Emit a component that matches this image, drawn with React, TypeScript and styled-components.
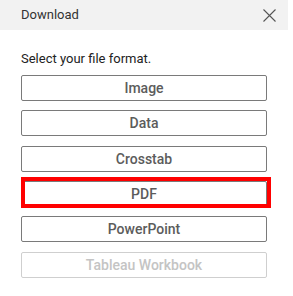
import React from "react";
import styled, { createGlobalStyle } from "styled-components";

const Global = createGlobalStyle`
  html, body { margin: 0; padding: 0; background: #ffffff; }
  body { font-family: Roboto, "Liberation Sans", Arial, sans-serif; }
`;

const Dialog = styled.div`
  width: 288px;
  display: flex;
  flex-direction: column;
`;

const Header = styled.div`
  height: 30px;
  background: #f2f2f2;
  display: flex;
  align-items: center;
  justify-content: space-between;
  padding: 0 12px 0 21px;
  box-sizing: border-box;
`;

const Title = styled.span`
  font-size: 13px;
  color: #333333;
  line-height: 30px;
`;

const Close = styled.button`
  width: 14px;
  height: 14px;
  border: 0;
  padding: 0;
  background: transparent;
  display: flex;
  align-items: center;
  justify-content: center;
  cursor: pointer;
`;

const Body = styled.div`
  padding: 20px 0 0 21px;
  display: flex;
  flex-direction: column;
`;

const Prompt = styled.div`
  font-size: 13px;
  color: #222222;
  line-height: 18px;
  margin-bottom: 7px;
`;

const List = styled.div`
  display: flex;
  flex-direction: column;
  gap: 9.33px;
  width: 246px;
`;

const Item = styled.div`
  position: relative;
`;

const OptionButton = styled.button<{ $disabled?: boolean }>`
  width: 100%;
  height: 26px;
  box-sizing: border-box;
  border: 1px solid ${(p) => (p.$disabled ? "#cfcfcf" : "#7a7a7a")};
  border-radius: 2px;
  background: #ffffff;
  font-family: Roboto, "Liberation Sans", Arial, sans-serif;
  font-size: 14px;
  font-weight: 500;
  color: ${(p) => (p.$disabled ? "#c4c4c4" : "#5c5c5c")};
  display: flex;
  align-items: center;
  justify-content: center;
  padding: 0;
  cursor: ${(p) => (p.$disabled ? "default" : "pointer")};
`;

const Highlight = styled.div`
  position: absolute;
  top: -4px;
  left: 0;
  right: -4px;
  bottom: -1px;
  border: 4px solid #ff0000;
  box-sizing: border-box;
  pointer-events: none;
`;

const options = [
  { label: "Image" },
  { label: "Data" },
  { label: "Crosstab" },
  { label: "PDF", highlight: true },
  { label: "PowerPoint" },
  { label: "Tableau Workbook", disabled: true },
];

export default function App() {
  return (
    <>
      <Global />
      <Dialog>
        <Header>
          <Title>Download</Title>
          <Close aria-label="Close">
            <svg width="13" height="13" viewBox="0 0 13 13">
              <path d="M0.5 0.5 L12.5 12.5 M12.5 0.5 L0.5 12.5" stroke="#555" strokeWidth="1.1" fill="none" />
            </svg>
          </Close>
        </Header>
        <Body>
          <Prompt>Select your file format.</Prompt>
          <List>
            {options.map((o) => (
              <Item key={o.label}>
                <OptionButton $disabled={o.disabled} disabled={o.disabled}>
                  {o.label}
                </OptionButton>
                {o.highlight && <Highlight />}
              </Item>
            ))}
          </List>
        </Body>
      </Dialog>
    </>
  );
}
